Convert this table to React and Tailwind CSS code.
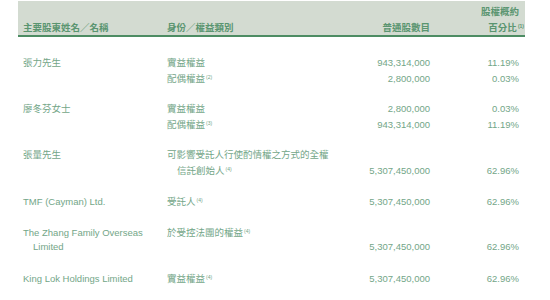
const F = { fontFamily: '"Liberation Sans", "Noto Sans CJK TC", sans-serif' };

function Sup({ n }) {
  return <span className="text-[5px] align-[3px] ml-[1px]">({n})</span>;
}

function Line({ c1, c2, c3, c4, i1, i2 }) {
  return (
    <div className="grid grid-cols-[144px_183px_80px_89px] h-[15px] leading-[15px] items-center whitespace-nowrap">
      <div className={i1 ? "pl-[10px]" : ""}>{c1}</div>
      <div className={i2 ? "pl-[10px]" : ""}>{c2}</div>
      <div className="text-right">{c3}</div>
      <div className="text-right">{c4}</div>
    </div>
  );
}

export default function App() {
  return (
    <div className="w-[550px] h-[300px] bg-white overflow-hidden pt-[1px]" style={F}>
      <div className="ml-[18px] w-[507px] h-[36px] bg-[#d3dbd1] border-b-2 border-[#4d8c63] text-[#5a9570] font-bold text-[9.5px] pl-[5px] grid grid-cols-[144px_183px_80px_89px] leading-[15px]">
        <div className="self-end pb-[1px]">主要股東姓名／名稱</div>
        <div className="self-end pb-[1px]">身份／權益類別</div>
        <div className="self-end pb-[1px] text-right">普通股數目</div>
        <div className="self-end pb-[1px] text-right">
          <div className="pt-[3px]">股權概約</div>
          <div className="mr-[-5px]">百分比<Sup n={1} /></div>
        </div>
      </div>
      <div className="pl-[23px] pt-[18px] text-[9.5px] text-[#73a688] flex flex-col gap-[16px]">
        <div>
          <Line c1="張力先生" c2="實益權益" c3="943,314,000" c4="11.19%" />
          <Line c2={<>配偶權益<Sup n={2} /></>} c3="2,800,000" c4="0.03%" />
        </div>
        <div>
          <Line c1="廖冬芬女士" c2="實益權益" c3="2,800,000" c4="0.03%" />
          <Line c2={<>配偶權益<Sup n={3} /></>} c3="943,314,000" c4="11.19%" />
        </div>
        <div>
          <Line c1="張量先生" c2="可影響受託人行使酌情權之方式的全權" />
          <Line i2 c2={<>信託創始人<Sup n={4} /></>} c3="5,307,450,000" c4="62.96%" />
        </div>
        <div>
          <Line c1="TMF (Cayman) Ltd." c2={<>受託人<Sup n={4} /></>} c3="5,307,450,000" c4="62.96%" />
        </div>
        <div>
          <Line c1="The Zhang Family Overseas" c2={<>於受控法團的權益<Sup n={4} /></>} />
          <Line i1 c1="Limited" c3="5,307,450,000" c4="62.96%" />
        </div>
        <div>
          <Line c1="King Lok Holdings Limited" c2={<>實益權益<Sup n={4} /></>} c3="5,307,450,000" c4="62.96%" />
        </div>
      </div>
    </div>
  );
}
